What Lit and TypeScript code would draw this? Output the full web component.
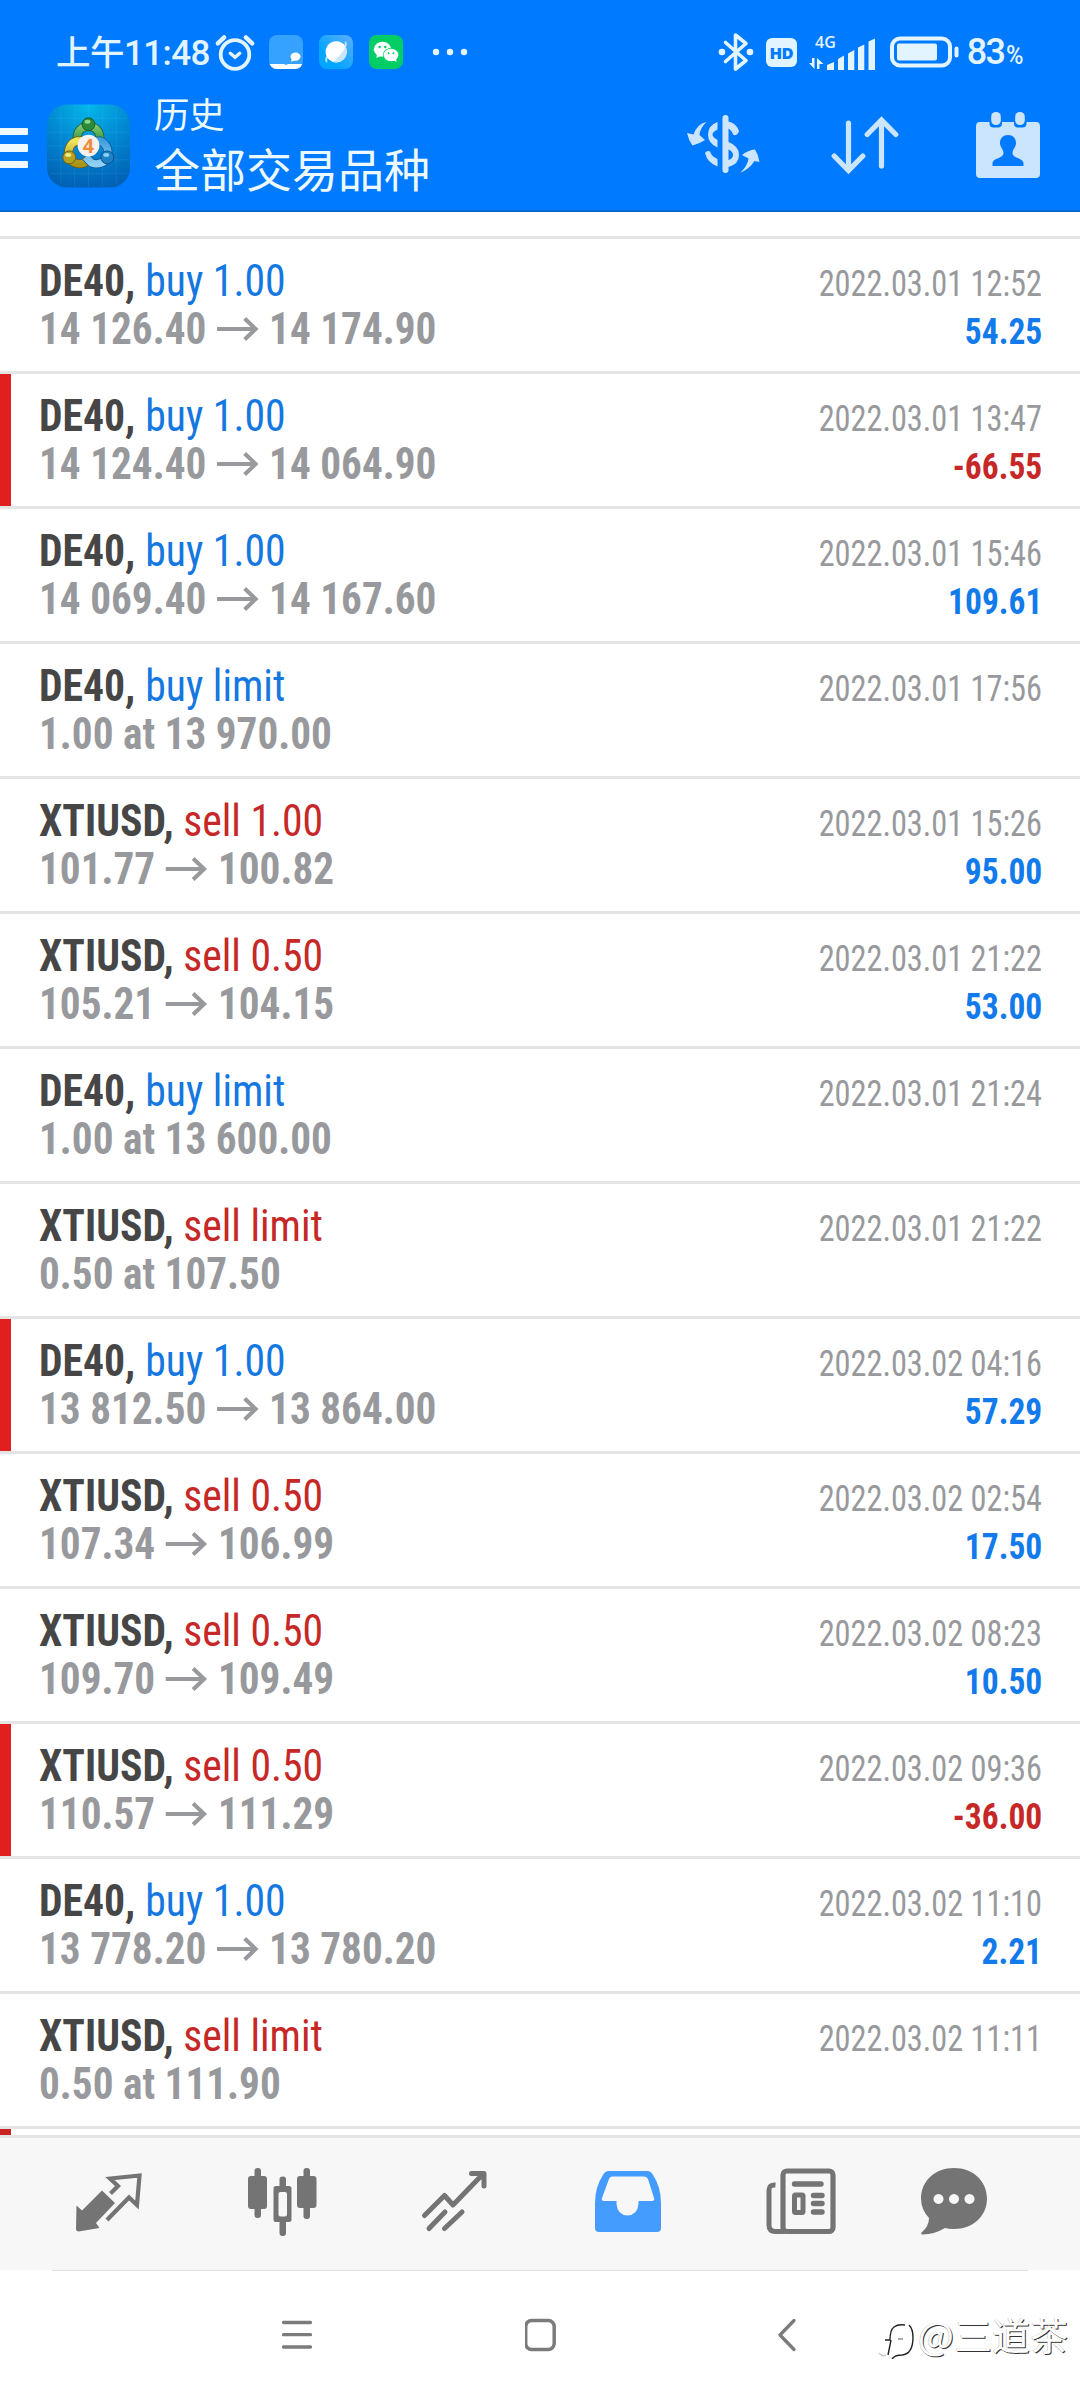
import { LitElement, html, css, svg, nothing } from "lit";

type Side = "buy" | "sell";
interface Deal {
  symbol: string;
  side: Side;
  action: string;
  from: string;
  to?: string;
  time: string;
  profit?: string;
  flagged?: boolean;
}

const deals: Deal[] = [
  { symbol: "DE40", side: "buy", action: "buy 1.00", from: "14 126.40", to: "14 174.90", time: "2022.03.01 12:52", profit: "54.25" },
  { symbol: "DE40", side: "buy", action: "buy 1.00", from: "14 124.40", to: "14 064.90", time: "2022.03.01 13:47", profit: "-66.55", flagged: true },
  { symbol: "DE40", side: "buy", action: "buy 1.00", from: "14 069.40", to: "14 167.60", time: "2022.03.01 15:46", profit: "109.61" },
  { symbol: "DE40", side: "buy", action: "buy limit", from: "1.00 at 13 970.00", time: "2022.03.01 17:56" },
  { symbol: "XTIUSD", side: "sell", action: "sell 1.00", from: "101.77", to: "100.82", time: "2022.03.01 15:26", profit: "95.00" },
  { symbol: "XTIUSD", side: "sell", action: "sell 0.50", from: "105.21", to: "104.15", time: "2022.03.01 21:22", profit: "53.00" },
  { symbol: "DE40", side: "buy", action: "buy limit", from: "1.00 at 13 600.00", time: "2022.03.01 21:24" },
  { symbol: "XTIUSD", side: "sell", action: "sell limit", from: "0.50 at 107.50", time: "2022.03.01 21:22" },
  { symbol: "DE40", side: "buy", action: "buy 1.00", from: "13 812.50", to: "13 864.00", time: "2022.03.02 04:16", profit: "57.29", flagged: true },
  { symbol: "XTIUSD", side: "sell", action: "sell 0.50", from: "107.34", to: "106.99", time: "2022.03.02 02:54", profit: "17.50" },
  { symbol: "XTIUSD", side: "sell", action: "sell 0.50", from: "109.70", to: "109.49", time: "2022.03.02 08:23", profit: "10.50" },
  { symbol: "XTIUSD", side: "sell", action: "sell 0.50", from: "110.57", to: "111.29", time: "2022.03.02 09:36", profit: "-36.00", flagged: true },
  { symbol: "DE40", side: "buy", action: "buy 1.00", from: "13 778.20", to: "13 780.20", time: "2022.03.02 11:10", profit: "2.21" },
  { symbol: "XTIUSD", side: "sell", action: "sell limit", from: "0.50 at 111.90", time: "2022.03.02 11:11" },
];

class StatusBar extends LitElement {
  static styles = css`
    :host { display: flex; justify-content: space-between; align-items: center; height: 76px; padding: 14px 55px 0 56px; color: #e2f4ff; }
    svg { display: block; flex: none; overflow: visible; }
    .group { display: flex; align-items: center; }
    .clock { display: flex; align-items: baseline; font-family: Roboto, "Noto Sans CJK SC", sans-serif; font-weight: 500; font-size: 35px; line-height: 44px; }
    .ampm { font-family: "Noto Sans CJK SC", sans-serif; font-size: 34.5px; letter-spacing: -0.5px; }
    .digits { letter-spacing: -0.6px; width: 84px; }
    .alarm { margin-left: 6.5px; }
    .app { margin-right: 16px; }
    .app.first { margin-left: 14px; }
    .dots { margin-left: 13px; }
    .hd { display: flex; align-items: center; justify-content: center; width: 31px; height: 29px; border-radius: 6px; background: #e2f4ff; color: #007aff; font: 800 16.5px/29px "Open Sans", sans-serif; margin-left: 12px; letter-spacing: -0.8px; }
    .signal { margin-left: 12px; }
    .battery { margin-left: 14px; }
    .gen { font: 600 16px "Open Sans", sans-serif; }
    .level { display: flex; align-items: baseline; margin: 4px 0 0 8px; font: 500 36px/44px Roboto, sans-serif; letter-spacing: -1.6px; }
    .level small { font-size: 25px; letter-spacing: 0; margin-left: 1.6px; width: 19px; transform: scaleX(0.95); transform-origin: left; }
  `;
  render() {
    return html`
      <div class="group">
        <div class="clock"><span class="ampm">上午</span><span class="digits">11:48</span></div>
        <svg class="alarm" width="40" height="40" viewBox="0 0 40 40" fill="none" stroke="currentColor" stroke-width="3.8" stroke-linecap="round">
          <circle cx="20" cy="22.5" r="14.3" /><path d="M15.3 21.3l4.7 4 4.7-4" stroke-width="3.4" />
          <path d="M2.8 11.4l6.4-6M37.2 11.4l-6.4-6" stroke-width="4.4" />
        </svg>
        <svg class="app first" width="34" height="34" viewBox="0 0 34 34">
          <defs><clipPath id="r"><rect width="34" height="34" rx="8" /></clipPath></defs>
          <g clip-path="url(#r)"><rect width="34" height="34" fill="#36a2ff" /><path d="M0 29h15l2 1 2-1h15v5H0z" fill="#fff" />
          <ellipse cx="26.5" cy="21.6" rx="5" ry="4.1" fill="#fff" /><path d="M22.8 23l-.6 4 4-2z" fill="#fff" /></g>
        </svg>
        <svg class="app" width="34" height="34" viewBox="0 0 34 34">
          <defs><linearGradient id="g" x1="0" y1="1" x2="1" y2="0"><stop offset=".3" stop-color="#00a6ff" /><stop offset="1" stop-color="#62adff" /></linearGradient></defs>
          <rect width="34" height="34" rx="8" fill="url(#g)" />
          <path d="M8 27c-1.5-1-1-4 1-6M26 7c1.5 1 1 4-1 6" stroke="#b9e4ff" stroke-width="2" fill="none" />
          <circle cx="17.2" cy="16.8" r="10.6" fill="#fff" /><path d="M27.8 16.8A10.6 10.6 0 0 1 13.5 26.7Q21.5 21.5 26.5 12Q27.8 14 27.8 16.8z" fill="#c9e6ff" />
        </svg>
        <svg class="app" width="34" height="34" viewBox="0 0 34 34">
          <rect width="34" height="34" rx="8" fill="#05cd66" />
          <ellipse cx="13.5" cy="14.2" rx="8.7" ry="7.5" fill="#fff" /><path d="M8 19l-.6 4 4.2-2z" fill="#fff" />
          <ellipse cx="22" cy="20" rx="8.2" ry="7" fill="#05cd66" /><ellipse cx="22" cy="20" rx="7.4" ry="6.2" fill="#fff" /><path d="M24 25l3.6 2-.8-4z" fill="#fff" />
          <g fill="#05cd66"><circle cx="10.6" cy="12" r="1.2" /><circle cx="16.3" cy="12" r="1.2" /><circle cx="19.6" cy="18.3" r="1" /><circle cx="24.4" cy="18.3" r="1" /></g>
        </svg>
        <svg class="dots" width="36" height="8" viewBox="0 0 36 8" fill="currentColor"><circle cx="4" cy="4" r="3.2" /><circle cx="18" cy="4" r="3.2" /><circle cx="32" cy="4" r="3.2" /></svg>
      </div>
      <div class="group">
        <svg width="36" height="40" viewBox="0 0 36 40" fill="none" stroke="currentColor" stroke-width="3.6" stroke-linejoin="round" stroke-linecap="round">
          <path d="M7.5 10.5L28 28.5 17.5 37V3L28 11.5 7.5 29.5" />
          <circle cx="4" cy="20" r="3.3" fill="currentColor" stroke="none" /><circle cx="32" cy="20" r="3.3" fill="currentColor" stroke="none" />
        </svg>
        <span class="hd">HD</span>
        <svg class="signal" width="67" height="36" viewBox="0 0 67 36" fill="currentColor">
          <text class="gen" x="6" y="14">4G</text>
          <path d="M0 29h3v-5h2.500V35zM8 24l6.500 6H10.500v5H8z" />
          <path d="M18 31l7-3v8h-7zM29 25l6-3.5V36h-6zM39 19.500l6.300-3.500V36H39zM49 13.500l6.300-3V36H49zM59.500 7.500l6.500-3V36h-6.500z" />
        </svg>
        <svg class="battery" width="69" height="32" viewBox="0 0 69 32" fill="currentColor">
          <rect x="2" y="2.500" width="58" height="27" rx="8" fill="none" stroke="currentColor" stroke-width="4" />
          <rect x="7" y="7.500" width="40" height="17" rx="2" /><rect x="64.500" y="10.500" width="4" height="11" rx="2" />
        </svg>
        <span class="level">83<small>%</small></span>
      </div>`;
  }
}
customElements.define("status-bar", StatusBar);

class TitleBar extends LitElement {
  static styles = css`
    :host { display: flex; align-items: center; height: 112px; padding: 0 40px 8px 0; border-bottom: 2px solid #0b66cf; color: #ecf9ff; }
    svg { display: block; flex: none; }
    .menu { display: flex; flex-direction: column; gap: 9.5px; width: 27.5px; margin-top: 4px; }
    .menu i { height: 7.2px; background: #ecf9ff; border-radius: 0 1px 1px 0; }
    .logo { margin-left: 19px; }
    .titles { flex: 1; margin: -4px 0 0 24.5px; font-family: "Noto Sans CJK SC", sans-serif; }
    .sub { font-size: 35.5px; line-height: 46px; letter-spacing: -0.5px; }
    .main { font-size: 46px; line-height: 62px; }
    .tools { display: flex; align-items: center; color: #cce5ff; margin-top: -3px; }
    .sync { margin: -1px 70.5px 0 0; }
    .sort { margin-right: 76px; }
    .four { font: 700 20px "Open Sans", sans-serif; }
  `;
  render() {
    return html`
      <div class="menu"><i></i><i></i><i></i></div>
      <svg class="logo" width="83" height="84" viewBox="0 0 84 84">
        <defs>
          <radialGradient id="bg" cx=".5" cy="0" r="1"><stop offset="0" stop-color="#04b8ec" /><stop offset=".55" stop-color="#0284cf" /><stop offset="1" stop-color="#0162b4" /></radialGradient>
          <linearGradient id="gr" x1="0" y1="0" x2="0" y2="1"><stop offset="0" stop-color="#7cc86a" /><stop offset="1" stop-color="#237c35" /></linearGradient>
          <linearGradient id="ye" x1="0" y1="0" x2="0" y2="1"><stop offset="0" stop-color="#f0e45c" /><stop offset="1" stop-color="#a99417" /></linearGradient>
          <linearGradient id="bl" x1="0" y1="0" x2="0" y2="1"><stop offset="0" stop-color="#3f9fdf" /><stop offset="1" stop-color="#8fd0f5" /></linearGradient>
        </defs>
        <rect width="84" height="84" rx="20" fill="url(#bg)" />
        <path d="M14 3v78M28 1v82M42 1v82M56 1v82M70 3v78M3 14h78M1 28h82M1 42h82M1 56h82M3 70h78" stroke="#6fd0ff" stroke-opacity=".13" fill="none" />
        <g fill="none">
          <path d="M30.500 42V33a11.500 11 0 0 1 23 0V42" stroke="#175b2a" stroke-width="9" /><path d="M30.500 42V33a11.500 11 0 0 1 23 0V42" stroke="url(#gr)" stroke-width="7.500" />
          <path d="M36 37h-6a10 12 0 0 0-8 14a11 9 0 0 0 16 8l7-6" stroke="#6b6010" stroke-width="9" /><path d="M36 37h-6a10 12 0 0 0-8 14a11 9 0 0 0 16 8l7-6" stroke="url(#ye)" stroke-width="7.500" />
          <path d="M50 37h4a12 12 0 0 1 7 15a11 9 0 0 1-16 7l-6-6" stroke="#0c4f8c" stroke-width="9" /><path d="M50 37h4a12 12 0 0 1 7 15a11 9 0 0 1-16 7l-6-6" stroke="url(#bl)" stroke-width="7.500" />
        </g>
        <circle cx="42" cy="20" r="6.5" fill="#2b8a3a" stroke="#175b2a" /><circle cx="22.5" cy="53.5" r="6.5" fill="#b5a21e" stroke="#6b6010" /><circle cx="61" cy="53.5" r="6.5" fill="#1e80c6" stroke="#0c4f8c" />
        <ellipse cx="41" cy="17.5" rx="3" ry="2" fill="#8bd88a" /><ellipse cx="21.5" cy="51" rx="3" ry="2" fill="#f3eb8a" /><ellipse cx="60" cy="51" rx="3" ry="2" fill="#8fd0f5" />
        <circle cx="42" cy="41.5" r="11" fill="#f5f1ee" />
        <text class="four" x="42" y="49" text-anchor="middle" fill="#f08c3a">4</text>
      </svg>
      <div class="titles"><div class="sub">历史</div><div class="main">全部交易品种</div></div>
      <div class="tools">
        <svg class="sync" width="74" height="58" viewBox="0 0 74 58" fill="currentColor">
          <path d="M19.500 7Q13 13 12.500 20L18 25Q12 29 5.500 30.500Q1.500 25 0 18L6.500 19.500Q10 9 19.500 7z" />
          <path d="M53.500 57.500Q60.500 51 61.500 43.500L55 40Q61 35 68 34.500Q71.500 40 72.500 47L67.500 46Q62 54.500 53.500 57.500z" />
          <path d="M30.500 7v7.500q-5 2.500-5 5t5 5.500v7.500q-9.500-4-9.500-13t9.500-12.500zM30.500 44v7.500q-10-3.500-12.500-13.500q2-3 5-1.500q1.500 5 7.500 7.500z" />
          <path d="M35.500 3a3 3 0 0 1 6 0v3.500q8 2 10.500 9.500-1.500 5-5.500 4-1.500-4.500-5-6.500V27q10.500 4 10.500 13t-10.500 12V55a3 3 0 0 1-6 0zM41.500 34.500V45q4.500-1.500 4.500-5t-4.500-5.500z" fill-rule="evenodd" />
        </svg>
        <svg class="sort" width="69" height="60" viewBox="0 0 69 60" fill="none" stroke="currentColor" stroke-width="5.2" stroke-linecap="round" stroke-linejoin="miter">
          <path d="M17.500 8v46M3.200 41l14.300 14.500L31.800 41M50.500 51V6M36.200 19.500L50.500 5 64.800 19.500" />
        </svg>
        <svg width="64" height="66" viewBox="0 0 64 66" fill="currentColor">
          <path d="M4 10h9.500v1.500q0 4 4 4h4.500q4 0 4-4V10h12v1.500q0 4 4 4h4.500q4 0 4-4V10H60q4 0 4 4v48q0 4-4 4H4q-4 0-4-4V14q0-4 4-4zM32 23c-5 0-8 3.500-8 8 0 4 3 6 3.500 9.500.5 6-10.500 5-11 10.500v3h31v-3c-.5-5.500-11.500-4.500-11-10.500.5-3.500 3.500-5.500 3.500-9.500 0-4.500-3-8-8-8z" fill-rule="evenodd" />
          <rect x="15.200" y="0" width="9.600" height="13" rx="4.500" /><rect x="39.200" y="0" width="9.600" height="13" rx="4.500" />
        </svg>
      </div>`;
  }
}
customElements.define("title-bar", TitleBar);

class DealRow extends LitElement {
  static properties = { deal: { attribute: false } };
  declare deal: Deal;
  static styles = css`
    :host { display: block; border-top: 3px solid #e4e4e4; height: 132px; font-family: "Roboto Condensed", Roboto, sans-serif; }
    .row { display: flex; justify-content: space-between; box-sizing: border-box; height: 132px; padding: 18px 38px 0 39px; }
    .flagged { border-left: 11px solid #e01f1f; padding-left: 28px; }
    .line { display: flex; align-items: baseline; font-size: 44px; line-height: 48px; white-space: pre; transform: scaleX(0.947); transform-origin: left; }
    .symbol { font-weight: 700; color: #464646; }
    .buy { color: #1577e0; margin-left: 10.5px; }
    .sell { color: #c62828; margin-left: 10px; }
    .price { font-weight: 700; color: #98999d; transform: scaleX(0.937); }
    .arrow { align-self: center; margin: 0 10.5px 1px 11.5px; }
    .meta { display: flex; flex-direction: column; align-items: flex-end; font-size: 36px; line-height: 48px; padding-top: 3px; color: #98999d; }
    .meta span { transform-origin: right; transform: scaleX(0.93); }
    .meta .time { transform: scaleX(0.897); }
    .profit { font-weight: 700; color: #127aea; }
    .loss { font-weight: 700; color: #c62828; }
  `;
  render() {
    const d = this.deal;
    return html`<div class="row ${d.flagged ? "flagged" : ""}">
      <div>
        <div class="line"><span class="symbol">${d.symbol},</span><span class=${d.side}>${d.action}</span></div>
        <div class="line price"><span>${d.from}</span>${d.to
          ? html`<svg class="arrow" width="45" height="24" viewBox="0 0 42 24" preserveAspectRatio="none" fill="none" stroke="#98999d" stroke-width="4"><path d="M0 12h38M27.500 1.500l11 10.500-11 10.500" /></svg><span>${d.to}</span>`
          : nothing}</div>
      </div>
      <div class="meta"><span class="time">${d.time}</span>${d.profit ? html`<span class=${d.profit.startsWith("-") ? "loss" : "profit"}>${d.profit}</span>` : nothing}</div>
    </div>`;
  }
}
customElements.define("deal-row", DealRow);

const tabs = [
  { name: "quotes", icon: svg`<path d="M1.500 39.500L7 44.500 27 24.500 40 37 21 57 24.500 62 3.500 65.500Q1 65 1 63z" fill="currentColor"/><path d="M35.500 27.500L43 20 35 12.500 64.500 9.500 62 39 54 31.500 32 54" fill="none" stroke="currentColor" stroke-width="4.2"/>` },
  { name: "chart", icon: svg`<g fill="currentColor"><rect x="0" y="10" width="19" height="33" rx="3"/><rect x="6.500" y="2" width="6.500" height="50" rx="3"/><rect x="49" y="10" width="19.500" height="32" rx="3"/><rect x="55.500" y="2" width="6.500" height="51" rx="3"/><path d="M28 20h13q2.500 0 2.500 2.500v31q0 2.500-2.500 2.500H28q-2.500 0-2.500-2.500v-31Q25.500 20 28 20zM32.500 26q-2 0-2 2v20.500q0 2 2 2h4.500q2 0 2-2V28q0-2-2-2z" fill-rule="evenodd"/><rect x="31.500" y="10.500" width="6.500" height="12" rx="3"/><rect x="31.500" y="54" width="6.500" height="16" rx="3"/></g>` },
  { name: "trade", icon: svg`<path d="M3.500 49.500L23.500 29.500 32 39 62 8M50.500 7.500H63V20M8 62.500L24 46M23.500 62.500L41 46" fill="none" stroke="currentColor" stroke-width="5" stroke-linecap="round" stroke-linejoin="round"/>` },
  { name: "history", active: true, icon: svg`<path d="M15 5h38q4 0 6 4 8 12 8 28v25q0 4-4 4H5q-4 0-4-4V37Q1 21 9 9q2-4 6-4zM18 10.500q-2 0-3 2.500L8 32q-1 3 2 3h12.500v3q1 11 11 11.500 10-.5 11-11.500v-3H58q3 0 2-3L54 13q-1-2.500-4-2.500z" fill="currentColor" fill-rule="evenodd"/>` },
  { name: "news", icon: svg`<g fill="none" stroke="currentColor"><rect x="16" y="5" width="50" height="60.500" rx="4" stroke-width="5.2"/><path d="M8.500 19Q2 18.500 2 24v35q0 6.500 6.500 6.500H18" stroke-width="5"/><path d="M27.500 18H54" stroke-width="5.4" stroke-linecap="round"/><path d="M46.500 29.500h8.500M46.500 37.500h8.500M46.500 46h8.500" stroke-width="5.4" stroke-linecap="round"/><rect x="27.500" y="29" width="8.500" height="17.500" rx="1" stroke-width="5"/></g>` },
  { name: "messages", icon: svg`<path d="M34 2c19 0 33 13 33 30.500S53 63 34 63q-6 0-9-1Q14 68.500 3 68.500 .5 68.500 1.500 66.500 9 60.500 9 52 1 43.500 1 32.500C1 15 15 2 34 2zM18.500 28a5 5 0 1 0 .01 0zM34 28a5 5 0 1 0 .01 0zM49.500 28a5 5 0 1 0 .01 0z" fill="currentColor" fill-rule="evenodd"/>` },
];

class TabBar extends LitElement {
  static styles = css`
    :host { display: flex; gap: 103.5px; height: 132px; padding-left: 74.5px; border-top: 3px solid #e4e4e4; background: #f7f7f7; color: #747474; }
    .tab { width: 69.5px; padding-top: 28px; }
    .tab svg { display: block; overflow: visible; }
    .active { color: #449cff; }
    .messages { margin-left: -20px; }
  `;
  render() {
    return tabs.map((t) => html`<div class="tab ${t.name} ${t.active ? "active" : ""}"><svg width="70" height="70" viewBox="0 0 70 70">${t.icon}</svg></div>`);
  }
}
customElements.define("tab-bar", TabBar);

class AppRoot extends LitElement {
  static styles = css`
    :host { display: flex; flex-direction: column; position: relative; width: 1080px; height: 2400px; background: #fff; overflow: hidden; }
    .head { background: #007aff; }
    .list { height: 1899px; padding-top: 24px; overflow: hidden; }
    .next { border-top: 3px solid #e4e4e4; height: 132px; }
    .next i { display: block; width: 11px; height: 132px; background: #c92323; }
    .nav { display: flex; justify-content: center; gap: 212px; align-items: center; flex: 1; margin: 0 52px; border-top: 1px solid #e2e2e2; color: #7b7b7b; padding: 0 0 2px 2px; }
    .nav svg { display: block; }
    .mark { position: absolute; left: 876px; top: 2309px; display: flex; align-items: center; color: #fff; font: 400 38px/44px "Noto Sans CJK SC", sans-serif; text-shadow: 1px 1px 0 #333, -0.5px -0.5px 0 #bbb; }
    .mark svg { display: block; margin-right: 4px; }
  `;
  render() {
    return html`
      <div class="head"><status-bar></status-bar><title-bar></title-bar></div>
      <div class="list">
        ${deals.map((d) => html`<deal-row .deal=${d}></deal-row>`)}
        <div class="next"><i></i></div>
      </div>
      <tab-bar></tab-bar>
      <div class="nav">
        <svg width="32" height="34" viewBox="0 0 32 34" fill="none" stroke="currentColor" stroke-width="3.3" stroke-linecap="round"><path d="M2.500 4.500h27M2.500 16.700h27M2.500 29h27" /></svg>
        <svg width="32" height="34" viewBox="0 0 32 34" fill="none" stroke="currentColor" stroke-width="3.5"><rect x="0.700" y="2.500" width="28.500" height="29" rx="6" /></svg>
        <svg width="32" height="34" viewBox="0 0 32 34" fill="none" stroke="currentColor" stroke-width="3.3" stroke-linecap="round" stroke-linejoin="round"><path d="M25 2.500L11 17 25 31.500" /></svg>
      </div>
      <div class="mark">
        <svg width="38" height="50" viewBox="0 0 38 50" fill="none" stroke="#222" stroke-width="1.4"><path d="M9 31h5q0-10 4-13 4-3 11-2M33 16q4 4 4 12 0 17-11 18-7 0-10 4M15 31l-3 15" /><path d="M22 30h5" stroke="#888" /><path d="M3 44q3 4 7 2" stroke="#ccc" /></svg>
        <span>@三道茶</span>
      </div>`;
  }
}
customElements.define("app-root", AppRoot);
